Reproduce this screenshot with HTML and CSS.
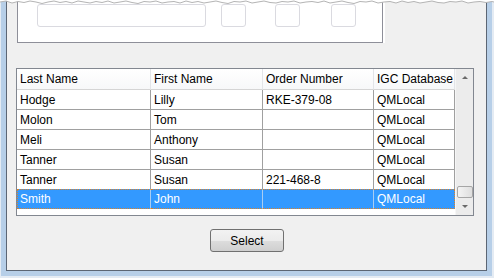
FILE: index.html
```html
<!DOCTYPE html>
<html lang="en">
  <head>
    <meta charset="UTF-8" />
    <title>Select Order</title>
    <link rel="stylesheet" href="styles.css">
  </head>
  <body>
    <div class="window">
      <div class="frame">
        <div class="client">
          <div class="panel">
            <div class="field wide"></div>
            <div class="field box b1"></div>
            <div class="field box b2"></div>
            <div class="field box b3"></div>
          </div>

          <div class="grid">
            <div class="grid-body">
              <table class="orders">
                <thead>
                  <tr>
                    <th class="c1">Last Name</th>
                    <th class="c2">First Name</th>
                    <th class="c3">Order Number</th>
                    <th class="c4">IGC Database</th>
                  </tr>
                </thead>
                <tbody>
                  <tr><td>Hodge</td><td>Lilly</td><td>RKE-379-08</td><td>QMLocal</td></tr>
                  <tr><td>Molon</td><td>Tom</td><td></td><td>QMLocal</td></tr>
                  <tr><td>Meli</td><td>Anthony</td><td></td><td>QMLocal</td></tr>
                  <tr><td>Tanner</td><td>Susan</td><td></td><td>QMLocal</td></tr>
                  <tr class="pre"><td>Tanner</td><td>Susan</td><td>221-468-8</td><td>QMLocal</td></tr>
                  <tr class="selected"><td>Smith</td><td>John</td><td></td><td>QMLocal</td></tr>
                </tbody>
              </table>
            </div>
            <div class="scrollbar">
              <div class="arrow"><span class="tri up"></span></div>
              <div class="track"><div class="thumb"></div></div>
              <div class="arrow"><span class="tri down"></span></div>
            </div>
          </div>

          <div class="actions">
            <button class="btn">Select</button>
          </div>
        </div>
      </div>
    </div>

    <svg class="torn" width="494" height="6" viewBox="0 0 494 6">
      <path fill="#fff" d="M0 0 L0 2 L6 1 L12 3 L18 1.5 L24 2.5 L30 1 L36 2 L42 3.5 L48 2 L54 1 L60 2.5 L66 1.5 L72 3 L78 1 L84 2 L90 3 L96 1.5 L102 2.5 L108 1 L114 3 L120 2 L126 1 L132 2.5 L138 3.5 L144 1.5 L150 2 L156 1 L162 3 L168 2 L174 1.5 L180 3 L186 1 L192 2.5 L198 1.5 L204 3 L210 2 L216 1 L222 2.5 L228 3.5 L234 1.5 L240 2 L246 1 L252 3 L258 2 L264 1 L270 2.5 L276 3 L282 1.5 L288 2 L294 1 L300 3 L306 2 L312 1.5 L318 2.5 L324 1 L330 3 L336 2 L342 1 L348 2.5 L354 3.5 L360 1.5 L366 2 L372 1 L378 3 L384 2 L390 1.5 L396 3 L402 1 L408 2.5 L414 1.5 L420 3 L426 2 L432 1 L438 2.5 L444 3 L450 1.5 L456 2 L462 1 L468 3 L474 2 L480 1.5 L486 2.5 L492 1.5 L494 2 L494 0 Z"/>
      <polyline fill="none" stroke="#b4b4b4" stroke-width="1" points="0,2 6,1 12,3 18,1.5 24,2.5 30,1 36,2 42,3.5 48,2 54,1 60,2.5 66,1.5 72,3 78,1 84,2 90,3 96,1.5 102,2.5 108,1 114,3 120,2 126,1 132,2.5 138,3.5 144,1.5 150,2 156,1 162,3 168,2 174,1.5 180,3 186,1 192,2.5 198,1.5 204,3 210,2 216,1 222,2.5 228,3.5 234,1.5 240,2 246,1 252,3 258,2 264,1 270,2.5 276,3 282,1.5 288,2 294,1 300,3 306,2 312,1.5 318,2.5 324,1 330,3 336,2 342,1 348,2.5 354,3.5 360,1.5 366,2 372,1 378,3 384,2 390,1.5 396,3 402,1 408,2.5 414,1.5 420,3 426,2 432,1 438,2.5 444,3 450,1.5 456,2 462,1 468,3 474,2 480,1.5 486,2.5 492,1.5 494,2"/>
    </svg>
  </body>
</html>
```

FILE: styles.css
```css
body {
  margin: 0;
  padding: 0;
  background: #fff;
  font-family: 'Liberation Sans', Arial, sans-serif;
  font-size: 12px;
  color: #000;
}
.window {
  width: 494px;
  height: 278px;
  box-sizing: border-box;
  border-left: 1px solid #e4ebf3;
  border-right: 2px solid #e4ebf3;
  border-bottom: 2px solid #e4ebf3;
}
.frame {
  height: 100%;
  box-sizing: border-box;
  border: 5px solid #b7cfe8;
  border-top: none;
}
.client {
  height: 100%;
  box-sizing: border-box;
  background: #f0f0f0;
  border: 1px solid #5c6674;
  border-top: none;
}
.panel {
  display: flex;
  align-items: flex-start;
  width: 366px;
  height: 43px;
  box-sizing: border-box;
  margin-left: 10px;
  background: #fff;
  border: 1px solid #8e8f99;
  border-top: none;
  box-shadow: 2px 0 0 #fff;
}
.field {
  height: 23px;
  box-sizing: border-box;
  margin-top: 4px;
  border: 1px solid #dadae0;
  border-radius: 3px;
  background: #fff;
}
.wide {
  width: 169px;
  margin-left: 19px;
}
.box {
  width: 25px;
}
.b1 { margin-left: 15px; }
.b2 { margin-left: 29px; }
.b3 { margin-left: 31px; }

.grid {
  display: flex;
  width: 458px;
  height: 148px;
  box-sizing: border-box;
  margin: 25px 0 0 9px;
  border: 1px solid #828790;
}
.grid-body {
  width: 438px;
  height: 146px;
  background: #fff;
  overflow: hidden;
}
.orders {
  table-layout: fixed;
  border-collapse: separate;
  border-spacing: 0;
  width: 438px;
}
.orders th,
.orders td {
  box-sizing: border-box;
  padding: 0 0 0 3px;
  text-align: left;
  font-weight: normal;
  white-space: nowrap;
  overflow: hidden;
}
.orders th {
  height: 21px;
  background: linear-gradient(#ffffff, #f7f8f9);
  border-right: 1px solid #e3e5e8;
  border-bottom: 1px solid #d5d5d5;
}
.orders .c1 { width: 134px; }
.orders .c2 { width: 112px; }
.orders .c3 { width: 111px; }
.orders .c4 { width: 81px; }
.orders td {
  height: 20px;
  border-right: 1px solid #a0a0a0;
  border-bottom: 1px solid #a0a0a0;
}
.orders .pre td {
  height: 19px;
  border-bottom: none;
}
.orders .selected td {
  background: #3399ff;
  color: #fff;
  border-top: 1px dotted #d9822b;
  border-bottom: 1px dotted #d9822b;
  border-right: 1px solid #a9cdf2;
}
.orders .selected td:first-child {
  border-left: 1px dotted #d9822b;
  padding-left: 2px;
}
.orders .selected td:last-child {
  border-right: 1px dotted #d9822b;
}

.scrollbar {
  display: flex;
  flex-direction: column;
  width: 18px;
  height: 146px;
  background: #ececec;
  border-left: 1px solid #f6f6f6;
  box-sizing: border-box;
}
.arrow {
  height: 17px;
  display: flex;
  align-items: center;
  justify-content: center;
}
.tri {
  width: 0;
  height: 0;
  border-left: 3px solid transparent;
  border-right: 3px solid transparent;
}
.tri.up {
  border-bottom: 3px solid #6a6a6a;
}
.tri.down {
  border-top: 3px solid #6a6a6a;
}
.track {
  flex: 1;
  display: flex;
  flex-direction: column;
  justify-content: flex-end;
  align-items: center;
}
.thumb {
  width: 16px;
  height: 12px;
  box-sizing: border-box;
  border: 1px solid #a6a6a6;
  border-radius: 2px;
  background: linear-gradient(90deg, #f4f4f4, #dedede);
}

.actions {
  display: flex;
  justify-content: center;
  margin-top: 13px;
  padding-left: 1px;
}
.btn {
  width: 74px;
  height: 23px;
  padding: 0;
  font-family: 'Liberation Sans', Arial, sans-serif;
  font-size: 12px;
  color: #000;
  border: 1px solid #707070;
  border-radius: 3px;
  background: linear-gradient(#f2f2f2 0%, #ebebeb 50%, #dddddd 51%, #cfcfcf 100%);
}

.torn {
  position: absolute;
  top: 0;
  left: 0;
}
```
